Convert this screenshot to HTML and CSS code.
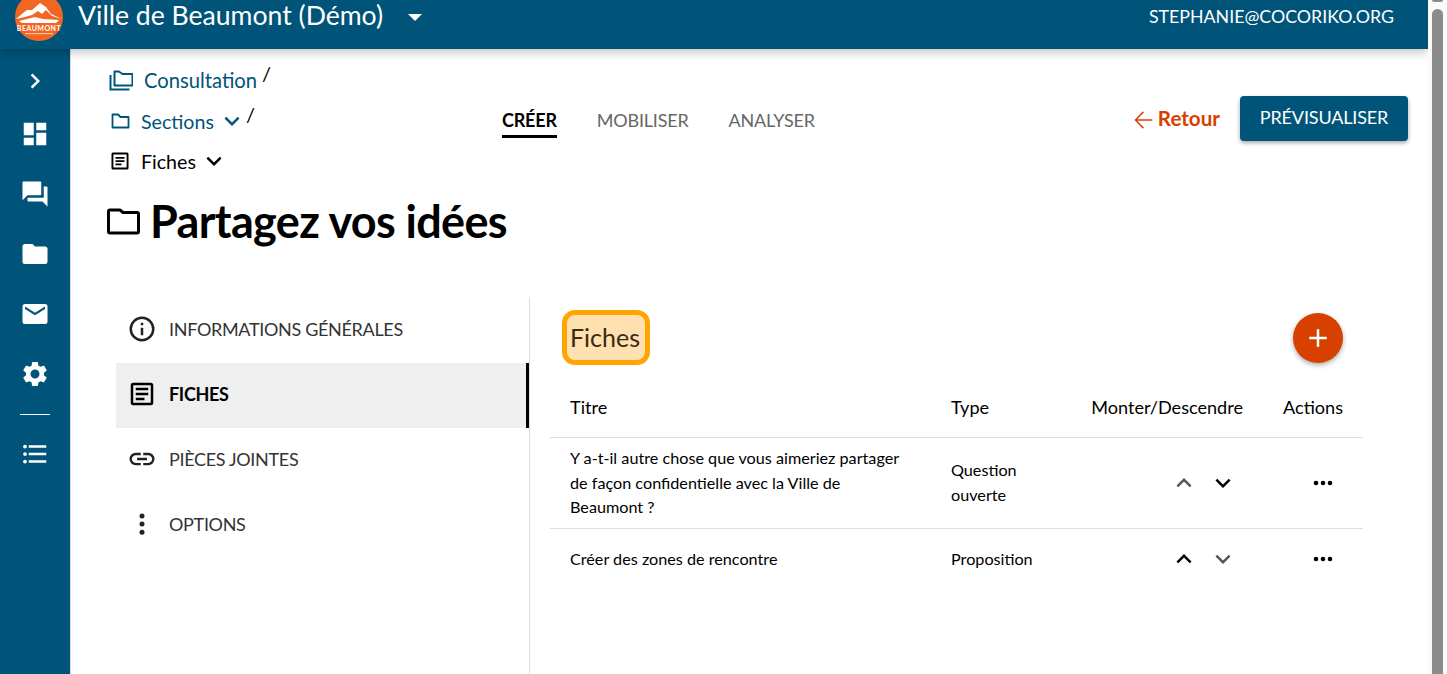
FILE: index.html
```html
<!DOCTYPE html>
<html lang="fr">
<head>
<meta charset="utf-8">
<title>Ville de Beaumont (Démo)</title>
<link rel="stylesheet" href="styles.css">
</head>
<body>
<div class="viewport">
  <div class="app">
    <header class="topbar">
      <div class="logo">
        <svg viewBox="0 0 48 48" width="48" height="48">
          <circle cx="24" cy="24" r="24" fill="#f26522"/>
          <path d="M1 26 L8 20 L12 17 L17 17 L25 10 L31 14 L36 21 L47 26 L37 23 L31 17 L27 21 L23 18 L17 22 L10 24Z" fill="#fff"/>
          <path d="M4 28 L20 24 L28 26 L44 27 L41 30 L7 30Z" fill="#fff"/>
          <text x="24" y="37.500" class="logo-t">BEAUMONT</text>
          <rect x="10" y="40" width="28" height="1.200" fill="#f9c3a2"/>
        </svg>
      </div>
      <span class="org">Ville de Beaumont (Démo)</span>
      <svg class="caret" viewBox="0 0 14 7" width="14" height="7"><path d="M0 0h14L7 7z" fill="#fff"/></svg>
      <span class="user">STEPHANIE@COCORIKO.ORG</span>
    </header>
    <div class="body">
      <nav class="rail">
        <svg class="ri chev" viewBox="0 0 24 24"><path d="M8.600 16.600 13.200 12 8.600 7.400 10 6l6 6-6 6z"/></svg>
        <svg class="ri" viewBox="0 0 24 24"><path d="M3 13h8V3H3zm0 8h8v-6H3zm10 0h8V11h-8zm0-18v6h8V3z"/></svg>
        <svg class="ri" viewBox="0 0 24 24"><path d="M21 6h-2v9H6v2c0 .55.45 1 1 1h11l4 4V7c0-.55-.45-1-1-1zm-4 6V3c0-.55-.45-1-1-1H3c-.55 0-1 .45-1 1v14l4-4h10c.55 0 1-.45 1-1z"/></svg>
        <svg class="ri" viewBox="0 0 24 24"><path d="M10 4H4a2 2 0 0 0-2 2v12a2 2 0 0 0 2 2h16a2 2 0 0 0 2-2V8a2 2 0 0 0-2-2h-8z"/></svg>
        <svg class="ri" viewBox="0 0 24 24"><path d="M20 4H4a2 2 0 0 0-2 2v12a2 2 0 0 0 2 2h16a2 2 0 0 0 2-2V6a2 2 0 0 0-2-2zm0 4-8 5-8-5V6l8 5 8-5z"/></svg>
        <svg class="ri" viewBox="0 0 24 24"><path d="M19.140 12.940c.04-.3.060-.61.060-.94s-.02-.64-.07-.94l2.030-1.580a.49.49 0 0 0 .12-.61l-1.920-3.320a.49.49 0 0 0-.59-.22l-2.390.96a7 7 0 0 0-1.620-.94l-.36-2.540a.48.48 0 0 0-.48-.41h-3.840a.48.48 0 0 0-.47.41l-.36 2.540c-.59.24-1.130.57-1.620.94l-2.390-.96a.48.48 0 0 0-.59.22L2.740 8.870a.48.48 0 0 0 .12.61l2.030 1.580c-.05.3-.09.63-.09.94s.02.64.07.94l-2.030 1.580a.49.49 0 0 0-.12.61l1.920 3.320c.12.22.37.29.59.22l2.390-.96c.5.38 1.030.7 1.620.94l.36 2.540c.05.24.24.41.48.41h3.840c.24 0 .44-.17.47-.41l.36-2.540c.59-.24 1.130-.56 1.620-.94l2.390.96c.22.08.47 0 .59-.22l1.920-3.320a.48.48 0 0 0-.12-.61zM12 15.600A3.600 3.600 0 1 1 12 8.400a3.600 3.600 0 0 1 0 7.200z"/></svg>
        <hr class="rail-sep">
        <svg class="ri" viewBox="0 0 24 24"><path d="M7 5h14v2H7zm0 6h14v2H7zm0 6h14v2H7z"/><circle cx="4" cy="6" r="1.500"/><circle cx="4" cy="12" r="1.500"/><circle cx="4" cy="18" r="1.500"/></svg>
      </nav>
      <main class="main">
        <div class="top">
          <div class="crumbs">
            <div class="crumb c1">
              <svg class="bi" viewBox="0 0 24 24" width="24" height="24"><path d="M1.500 7v14.500h19" fill="none" stroke="#00547a" stroke-width="2"/><path d="M9.800 3.500H5.500v14h18V6h-10z" fill="none" stroke="#00547a" stroke-width="2" stroke-linejoin="round"/></svg>
              <a>Consultation</a><i class="slash">/</i>
            </div>
            <div class="crumb c2">
              <svg class="bi" viewBox="0 0 20 20" width="20" height="20"><path d="M8 3.500H2.500v13h16V6h-8z" fill="none" stroke="#00547a" stroke-width="1.800" stroke-linejoin="round"/></svg>
              <a>Sections</a>
              <svg class="dd" viewBox="0 0 24 24" width="30" height="30"><path d="M7.400 8.600 12 13.200l4.600-4.600L18 10l-6 6-6-6z" fill="#00547a"/></svg><i class="slash">/</i>
            </div>
            <div class="crumb c3">
              <svg class="bi" viewBox="0 0 20 20" width="20" height="20"><path d="M3 1.500h14A1.500 1.500 0 0 1 18.500 3v14a1.500 1.500 0 0 1-1.500 1.500H3A1.500 1.500 0 0 1 1.500 17V3A1.500 1.500 0 0 1 3 1.500zm.400 1.900v13.200h13.200V3.400zM5.500 6h9v1.800h-9zm0 3.200h9V11h-9zm0 3.200h6v1.800h-6z" fill="#000"/></svg>
              <b>Fiches</b>
              <svg class="dd" viewBox="0 0 24 24" width="30" height="30"><path d="M7.400 8.600 12 13.200l4.600-4.600L18 10l-6 6-6-6z" fill="#000"/></svg>
            </div>
          </div>
          <div class="tabs">
            <span class="tab on">CRÉER</span>
            <span class="tab">MOBILISER</span>
            <span class="tab">ANALYSER</span>
          </div>
          <div class="acts">
            <a class="back"><svg viewBox="0 0 24 24" width="28" height="28"><path d="M20 11.300H7l5.800-5.800L12 4.600 4.600 12l7.400 7.400.8-.9L7 12.700h13z" fill="#d84000"/></svg>Retour</a>
            <button class="preview">PRÉVISUALISER</button>
          </div>
        </div>
        <h1 class="title">
          <svg viewBox="0 0 36 36" width="36" height="36"><path d="M15 7H5a1.500 1.500 0 0 0-1.500 1.500v20A1.500 1.500 0 0 0 5 30h27a1.500 1.500 0 0 0 1.500-1.500V11A1.500 1.500 0 0 0 32 9.500H18z" fill="none" stroke="#000" stroke-width="3" stroke-linejoin="round"/></svg>
          Partagez vos idées
        </h1>
        <div class="split">
          <aside class="side">
            <a class="item"><svg viewBox="0 0 24 24" width="30" height="30"><path d="M11 7h2v2h-2zm0 4h2v6h-2zm1-9a10 10 0 1 0 0 20 10 10 0 0 0 0-20zm0 18a8 8 0 1 1 0-16 8 8 0 0 1 0 16z"/></svg>INFORMATIONS GÉNÉRALES</a>
            <a class="item on"><svg viewBox="0 0 24 24" width="30" height="30"><path d="M19 5v14H5V5zm0-2H5a2 2 0 0 0-2 2v14a2 2 0 0 0 2 2h14a2 2 0 0 0 2-2V5a2 2 0 0 0-2-2z"/><path d="M7 7h10v2H7zm0 4h10v2H7zm0 4h7v2H7z"/></svg>FICHES</a>
            <a class="item"><svg viewBox="0 0 24 24" width="30" height="30"><path d="M3.900 12c0-1.710 1.390-3.100 3.100-3.100h4V7H7a5 5 0 0 0 0 10h4v-1.900H7c-1.710 0-3.100-1.390-3.100-3.100zM8 13h8v-2H8zm9-6h-4v1.900h4c1.710 0 3.100 1.390 3.100 3.100s-1.390 3.100-3.100 3.100h-4V17h4a5 5 0 0 0 0-10z"/></svg>PIÈCES JOINTES</a>
            <a class="item"><svg viewBox="0 0 24 24" width="30" height="30"><circle cx="12" cy="5.500" r="2"/><circle cx="12" cy="12" r="2"/><circle cx="12" cy="18.500" r="2"/></svg>OPTIONS</a>
          </aside>
          <section class="panel">
            <div class="phead">
              <h2 class="hl">Fiches</h2>
              <button class="fab"><svg viewBox="0 0 24 24" width="30" height="30"><path d="M19 13h-6v6h-2v-6H5v-2h6V5h2v6h6z" fill="#fff"/></svg></button>
            </div>
            <div class="row head">
              <div class="c-t">Titre</div><div class="c-y">Type</div><div class="c-m">Monter/Descendre</div><div class="c-a">Actions</div>
            </div>
            <div class="row r1">
              <div class="c-t">Y a-t-il autre chose que vous aimeriez partager de façon confidentielle avec la Ville de Beaumont ?</div>
              <div class="c-y">Question ouverte</div>
              <div class="c-m arrows">
                <svg viewBox="0 0 24 24" width="30" height="30"><path d="M7.400 15.400 12 10.800l4.600 4.600L18 14l-6-6-6 6z" fill="#555"/></svg>
                <svg viewBox="0 0 24 24" width="30" height="30"><path d="M7.400 8.600 12 13.200l4.600-4.600L18 10l-6 6-6-6z" fill="#000"/></svg>
              </div>
              <div class="c-a"><svg viewBox="0 0 24 24" width="24" height="24"><circle cx="5" cy="12" r="2.300"/><circle cx="12" cy="12" r="2.300"/><circle cx="19" cy="12" r="2.300"/></svg></div>
            </div>
            <div class="row r2">
              <div class="c-t">Créer des zones de rencontre</div>
              <div class="c-y">Proposition</div>
              <div class="c-m arrows">
                <svg viewBox="0 0 24 24" width="30" height="30"><path d="M7.400 15.400 12 10.800l4.600 4.600L18 14l-6-6-6 6z" fill="#000"/></svg>
                <svg viewBox="0 0 24 24" width="30" height="30"><path d="M7.400 8.600 12 13.200l4.600-4.600L18 10l-6 6-6-6z" fill="#555"/></svg>
              </div>
              <div class="c-a"><svg viewBox="0 0 24 24" width="24" height="24"><circle cx="5" cy="12" r="2.300"/><circle cx="12" cy="12" r="2.300"/><circle cx="19" cy="12" r="2.300"/></svg></div>
            </div>
            <div class="more">Modèles de fiches</div>
          </section>
        </div>
      </main>
    </div>
  </div>
  <div class="scrollbar"><div class="sb-up"></div><div class="sb-thumb"></div></div>
</div>
</body>
</html>
```
FILE: styles.css
```css
* { box-sizing: border-box; }
html, body { margin: 0; padding: 0; height: 674px; overflow: hidden; background: #fff; }
body { font-family: "Lato", "Liberation Sans", sans-serif; color: #000; }
.viewport { display: flex; height: 674px; width: 1447px; }
.app { width: 1428px; display: flex; flex-direction: column; height: 674px; overflow: hidden; }

.topbar { position: relative; z-index: 2; flex: none; height: 49px; background: #00547a; color: #fff; display: flex; align-items: flex-start; box-shadow: 0 3px 10px rgba(0,0,0,.25); }
.logo { width: 48px; height: 48px; margin: -7px 0 0 15px; flex: none; }
.logo svg { display: block; }
.logo-t { font: 700 7px "Lato", sans-serif; fill: #fff; text-anchor: middle; letter-spacing: .5px; }
.org { font-size: 26.600px; line-height: 30px; margin: 0 0 0 15px; white-space: nowrap; }
.caret { margin: 14px 0 0 25px; flex: none; }
.user { margin: 4px 34px 0 auto; font-size: 17.800px; line-height: 24px; white-space: nowrap; }

.body { flex: 1; display: flex; min-height: 0; }
.rail { flex: none; width: 71px; background: #00547a; border-right: 1px solid #ddd; display: flex; flex-direction: column; align-items: center; padding-top: 17px; gap: 30px; }
.ri { width: 30px; height: 30px; fill: #fff; flex: none; }
.chev { margin-bottom: -7px; }
.rail-sep { width: 30px; height: 1px; border: 0; background: #fff; margin: -5px 0 -6px; flex: none; }

.main { flex: 1; min-width: 0; display: flex; flex-direction: column; padding-left: 35px; }
.top { display: flex; align-items: flex-start; flex: none; height: 132px; position: relative; }
.crumbs { width: 396px; flex: none; display: flex; flex-direction: column; padding-top: 18px; }
.crumb { display: flex; align-items: center; height: 26px; font-size: 19.600px; color: #00547a; white-space: nowrap; }
.crumb a { color: #00547a; }
.crumb b { font-weight: 400; color: #000; }
.bi { flex: none; }
.c1 { margin-left: 3px; margin-bottom: 15px; font-size: 20.200px; }
.c1 a { margin-left: 11px; }
.c2 { margin-left: 4px; margin-bottom: 14px; }
.c2 a { margin-left: 11px; }
.c3 { margin-left: 4px; }
.c3 b { margin-left: 11px; }
.dd { margin-left: 3px; flex: none; }
.slash { font-style: normal; color: #000; font-size: 20px; line-height: 20px; align-self: flex-start; margin-left: 5px; margin-top: -4px; }
.c2 .slash { margin-left: -1px; margin-top: -4px; }

.tabs { display: flex; gap: 40px; padding-top: 60px; flex: none; }
.tab { font-size: 18px; line-height: 22px; color: #666; padding-bottom: 4px; letter-spacing: -.2px; }
.tab.on { color: #000; font-weight: 700; border-bottom: 3px solid #000; }

.acts { margin-left: auto; margin-right: 20px; display: flex; align-items: center; padding-top: 47px; gap: 20px; }
.back { display: flex; align-items: center; color: #d84000; font-size: 20.600px; font-weight: 700; gap: 1px; margin-top: -1px; }
.back svg { margin: 4px 0 0 -1px; }
.preview { width: 168px; height: 45px; border: 0; border-radius: 4px; background: #00547a; color: #fff; font: 400 18px "Lato", sans-serif; letter-spacing: -.15px; box-shadow: 0 2px 4px rgba(0,0,0,.35); padding: 0 0 4px; }

.title { margin: 0 0 0 -1px; flex: none; height: 116px; padding-top: 5px; font-size: 45px; line-height: 70px; font-weight: 700; display: flex; align-items: flex-start; gap: 9px; letter-spacing: -.65px; }
.title svg { margin-top: 17px; flex: none; }

.split { flex: 1; display: flex; min-height: 0; padding-left: 10px; }
.side { width: 414px; flex: none; border-right: 1px solid #ddd; padding-top: 1px; }
.item { display: flex; align-items: center; height: 65px; padding: 0 0 4px 11px; gap: 12px; font-size: 18px; color: #333; letter-spacing: -.32px; }
.item svg { fill: #222; flex: none; }
.item.on { background: #efefef; color: #000; font-weight: 700; border-right: 3px solid #000; }
.item.on svg { fill: #000; }

.panel { flex: 1; min-width: 0; padding: 0 65px 0 20px; }
.phead { display: flex; align-items: center; justify-content: space-between; height: 82px; padding: 0 20px 0 12px; }
.hl { margin: -2px 0 0; font-size: 25px; font-weight: 400; height: 55px; padding: 0 5px 0 3px; background: #ffe0b0; border: 5px solid #ffa500; border-radius: 13px; color: #3a2a10; display: flex; align-items: center; }
.fab { width: 50px; height: 50px; border: 0; border-radius: 50%; background: #d84000; box-shadow: 0 2px 5px rgba(0,0,0,.35); display: flex; align-items: center; justify-content: center; padding: 0; }

.row { display: flex; align-items: center; border-bottom: 1px solid #ddd; padding-left: 20px; padding-right: 20px; font-size: 16.200px; }
.c-t { width: 381px; flex: none; line-height: 24.500px; padding-right: 40px; }
.c-y { width: 100px; flex: none; line-height: 25px; padding: 0 20px 2px 0; }
.c-m { flex: 1; }
.c-a { width: 80px; flex: none; text-align: right; }
.head { height: 59px; font-size: 18.100px; padding-bottom: 2px; }
.head .c-y { padding: 0; }
.head .c-m { text-align: right; white-space: nowrap; }
.head .c-a { width: 100px; }
.r1 { height: 91px; }
.r2 { height: 60px; border-bottom: 0; }
.arrows { display: flex; justify-content: flex-end; gap: 9px; padding-right: 25px; }
.c-a svg { display: block; margin-left: auto; margin-right: 8px; }
.more { margin: 80px 0 0 20px; font-size: 18px; line-height: 22px; white-space: nowrap; }

.scrollbar { width: 19px; flex: none; background: #fafafa; position: relative; padding: 0 4px 0 4px; }
.sb-up { height: 2px; width: 11px; background: #8b8b8b; border-radius: 0 0 3px 3px; }
.sb-thumb { margin-top: 7px; width: 11px; height: 665px; background: #8b8b8b; border-radius: 6px 6px 0 0; }
```
